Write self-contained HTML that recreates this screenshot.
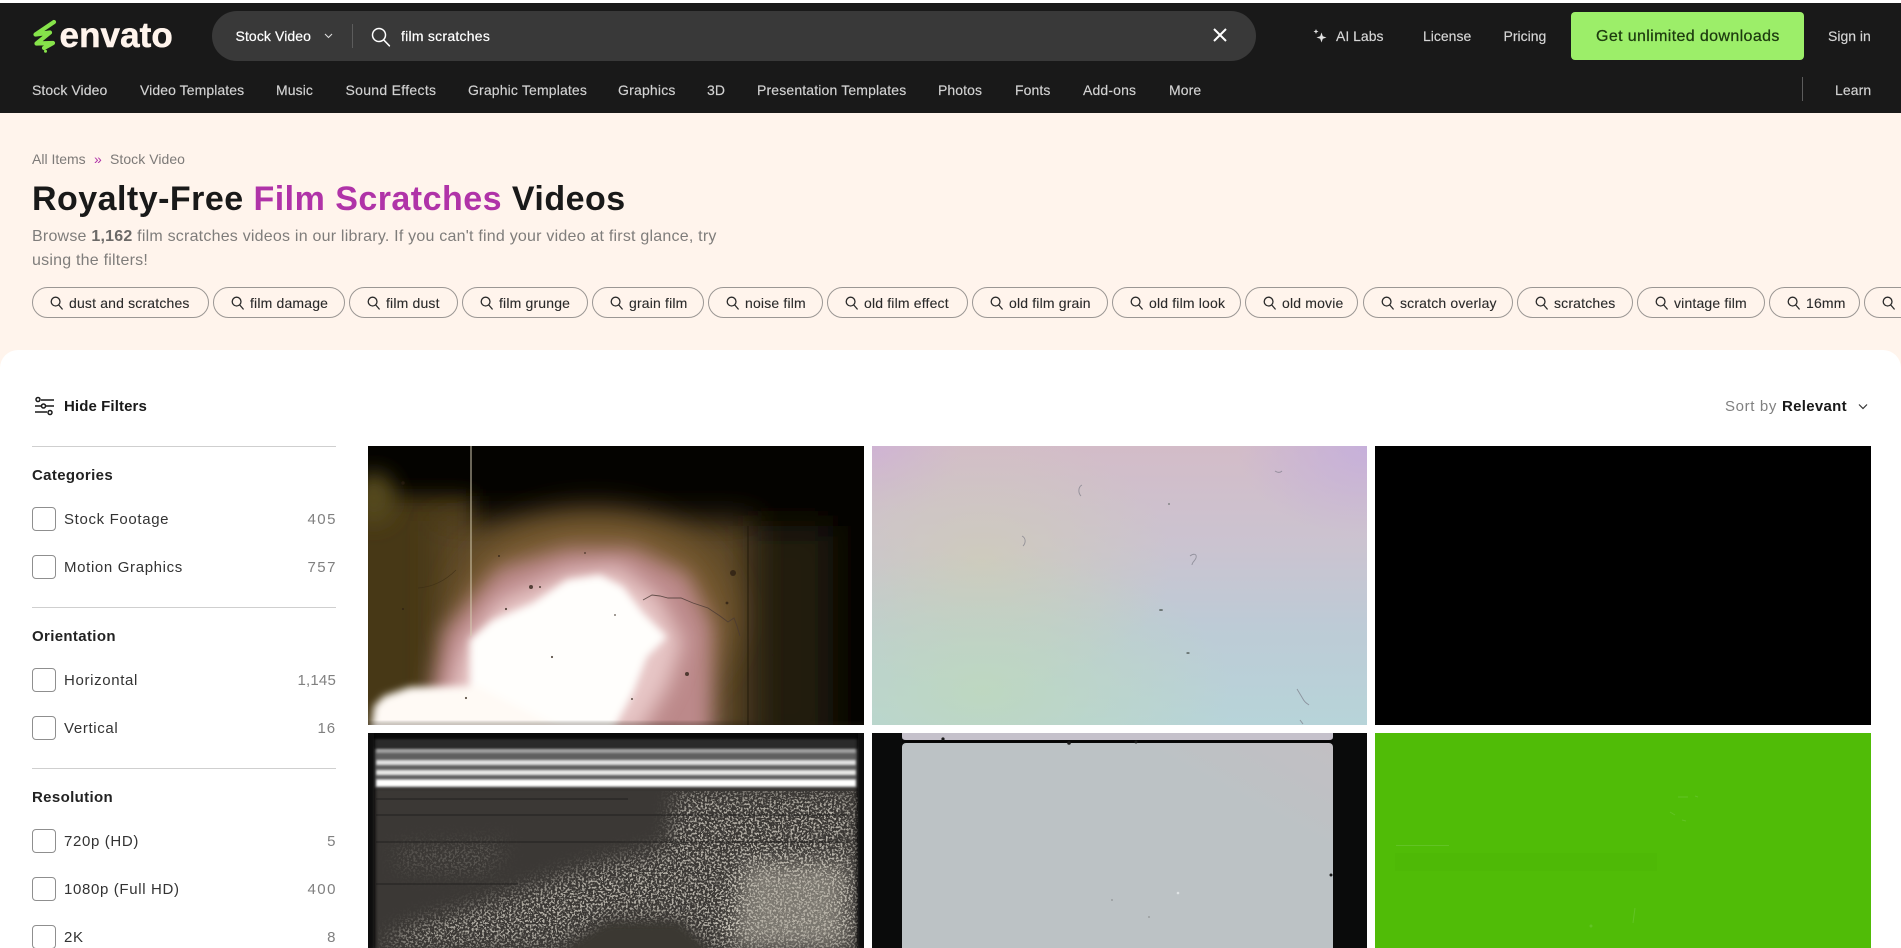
<!DOCTYPE html>
<html lang="en">
<head>
<meta charset="utf-8">
<title>Royalty-Free Film Scratches Videos</title>
<style>
html,body{margin:0;padding:0;width:1901px;height:948px;overflow:hidden;background:#fff}
body{position:relative;font-family:"Liberation Sans",sans-serif;font-size:14px;color:#191919}
a{color:inherit;text-decoration:none}
.a{position:absolute}
.t{position:absolute;white-space:nowrap;line-height:20px}
header{position:absolute;left:0;top:3px;width:1901px;height:110px;background:#191919}
.top{color:#d6d6d6;-webkit-text-stroke:.15px #d6d6d6}
.nav{color:#d2d2d2;top:80px;letter-spacing:.08px;-webkit-text-stroke:.15px #d2d2d2}
.peach{position:absolute;left:0;top:113px;width:1901px;height:270px;background:#fff4ec}
.panel{position:absolute;left:0;top:350px;width:1901px;height:598px;background:#fff;border-radius:18px 18px 0 0}
.pill{position:absolute;top:287px;height:31px;box-sizing:border-box;border:1px solid #9b9794;border-radius:16px;display:flex;align-items:center;padding-left:17px;white-space:nowrap;letter-spacing:.17px;color:#2a2a2a;-webkit-text-stroke:.1px #2a2a2a}
.pill svg{margin-right:6px;flex:none}
.rule{position:absolute;left:32px;width:304px;height:1px;background:#cfcfcf}
.h{left:32px;font-weight:bold;font-size:15px;letter-spacing:.35px;color:#222}
.box{position:absolute;left:32px;width:24px;height:24px;box-sizing:border-box;border:1px solid #8f8f8f;border-radius:4px;background:#fff}
.l{left:64px;font-size:15px;letter-spacing:.65px;color:#333}
.n{right:1564px;font-size:15px;letter-spacing:1.5px;color:#808080}
.card{position:absolute;overflow:hidden;display:block}
</style>
</head>
<body>
<svg width="0" height="0" style="position:absolute">
  <defs>
    <symbol id="q" viewBox="0 0 13 14"><circle cx="5.6" cy="5.6" r="4.4" fill="none" stroke="currentColor" stroke-width="1.3"/><path d="M8.8 9l3.4 4" fill="none" stroke="currentColor" stroke-width="1.3" stroke-linecap="round"/></symbol>
    <filter id="b1" x="-5%" y="-50%" width="110%" height="200%"><feGaussianBlur stdDeviation="1.1"/></filter>
    <filter id="b2" x="-10%" y="-20%" width="120%" height="140%"><feGaussianBlur stdDeviation="2"/></filter>
    <filter id="b5" x="-20%" y="-30%" width="140%" height="160%"><feGaussianBlur stdDeviation="4"/></filter>
    <filter id="b10" x="-40%" y="-40%" width="180%" height="180%"><feGaussianBlur stdDeviation="10"/></filter>
    <filter id="b16" x="-40%" y="-40%" width="180%" height="180%"><feGaussianBlur stdDeviation="16"/></filter>
    <filter id="grain" x="0" y="0" width="1" height="1"><feTurbulence type="fractalNoise" baseFrequency=".48" numOctaves="2" seed="4"/><feColorMatrix values="0 0 0 0 .64  0 0 0 0 .61  0 0 0 0 .54  0 0 0 9 -4.500"/><feComposite in2="SourceGraphic" operator="in"/></filter>
  </defs>
</svg>

<header></header>

<!-- logo -->
<svg class="a" style="left:30px;top:17px" width="30" height="38" viewBox="0 0 30 38">
  <path d="M24 5L5.500 17.500 20 15.500 6.500 26.500 23 26 14 31" fill="none" stroke="#86e34a" stroke-width="4.200" stroke-linecap="round" stroke-linejoin="round"/>
  <circle cx="15.500" cy="34.300" r="1.500" fill="#86e34a"/>
</svg>
<a class="t" href="#" style="left:59.500px;top:20px;line-height:32px;font-size:35px;font-weight:bold;color:#fff4ec;letter-spacing:.1px;-webkit-text-stroke:.5px #fff4ec">envato</a>

<!-- search -->
<div class="a" style="left:212px;top:11px;width:1044px;height:50px;border-radius:25px;background:#393939"></div>
<span class="t" style="left:235.500px;top:26px;color:#fff;letter-spacing:.1px;-webkit-text-stroke:.2px #fff">Stock Video</span>
<svg class="a" style="left:324px;top:33px" width="9" height="6" viewBox="0 0 9 6"><path d="M1 1l3.500 3.500L8 1" fill="none" stroke="#ddd" stroke-width="1.100"/></svg>
<div class="a" style="left:352px;top:24px;width:1px;height:24px;background:#5c5c5c"></div>
<svg class="a" style="left:371px;top:27px" width="20" height="20" viewBox="0 0 20 20"><circle cx="8" cy="8" r="6.500" fill="none" stroke="#fff" stroke-width="1.500"/><path d="M12.600 12.800l5.800 6" fill="none" stroke="#fff" stroke-width="1.500" stroke-linecap="round"/></svg>
<span class="t" style="left:401px;top:26px;color:#fff;letter-spacing:.25px;-webkit-text-stroke:.2px #fff">film scratches</span>
<svg class="a" style="left:1213px;top:28px" width="14" height="14" viewBox="0 0 14 14"><path d="M1 1l12 12M13 1L1 13" stroke="#fff" stroke-width="2" fill="none"/></svg>

<!-- top right -->
<svg class="a" style="left:1312px;top:28px" width="16" height="16" viewBox="0 0 16 16"><path d="M9.500 4.500l1.300 3.700 3.700 1.300-3.700 1.300-1.300 3.700-1.300-3.700L4.500 9.500l3.700-1.300z" fill="#e2e2e2"/><path d="M4 1l.7 1.800 1.800.7-1.800.7L4 6l-.7-1.800-1.800-.7 1.800-.7z" fill="#e2e2e2"/></svg>
<a class="t top" href="#" style="left:1336px;top:26px">AI Labs</a>
<a class="t top" href="#" style="left:1423px;top:26px">License</a>
<a class="t top" href="#" style="left:1503.500px;top:26px">Pricing</a>
<a class="a" href="#" style="left:1571px;top:12px;width:233px;height:48px;border-radius:4px;background:#9cee69"></a>
<span class="t" style="left:1596px;top:27px;font-size:16px;letter-spacing:.37px;color:#1c3a0e;-webkit-text-stroke:.25px #1c3a0e">Get unlimited downloads</span>
<a class="t top" href="#" style="left:1828px;top:26px">Sign in</a>

<!-- nav -->
<a class="t nav" href="#" style="left:32px">Stock Video</a>
<a class="t nav" href="#" style="left:140px">Video Templates</a>
<a class="t nav" href="#" style="left:276px">Music</a>
<a class="t nav" href="#" style="left:345.500px;letter-spacing:.3px">Sound Effects</a>
<a class="t nav" href="#" style="left:468px;letter-spacing:.15px">Graphic Templates</a>
<a class="t nav" href="#" style="left:618px;letter-spacing:.2px">Graphics</a>
<a class="t nav" href="#" style="left:707px">3D</a>
<a class="t nav" href="#" style="left:757px;letter-spacing:.15px">Presentation Templates</a>
<a class="t nav" href="#" style="left:938px">Photos</a>
<a class="t nav" href="#" style="left:1015px">Fonts</a>
<a class="t nav" href="#" style="left:1083px;letter-spacing:.15px">Add-ons</a>
<a class="t nav" href="#" style="left:1169px">More</a>
<div class="a" style="left:1802px;top:77px;width:1px;height:24px;background:#5c5c5c"></div>
<a class="t nav" href="#" style="left:1835px">Learn</a>

<!-- hero -->
<div class="peach"></div>
<span class="t" style="left:32px;top:149px;color:#7d7a78">All Items</span>
<span class="t" style="left:94px;top:149px;color:#b033a8">»</span>
<span class="t" style="left:110px;top:149px;color:#7d7a78;letter-spacing:.05px">Stock Video</span>
<h1 class="t" style="left:32px;top:179px;margin:0;line-height:40px;font-size:34px;font-weight:bold;letter-spacing:.47px;color:#191919">Royalty-Free <span style="color:#b033a8">Film Scratches</span> Videos</h1>
<p class="a" style="left:32px;top:225px;margin:0;width:700px;font-size:16px;line-height:24px;letter-spacing:.22px;color:#7f7d7b">Browse <b style="color:#6b6967">1,162</b> film scratches videos in our library. If you can't find your video at first glance, try<br>using the filters!</p>

<a class="pill" href="#" style="left:32px;width:177px"><svg width="13" height="14"><use href="#q"/></svg>dust and scratches</a>
<a class="pill" href="#" style="left:213px;width:132px"><svg width="13" height="14"><use href="#q"/></svg>film damage</a>
<a class="pill" href="#" style="left:349px;width:109px"><svg width="13" height="14"><use href="#q"/></svg>film dust</a>
<a class="pill" href="#" style="left:462px;width:126px"><svg width="13" height="14"><use href="#q"/></svg>film grunge</a>
<a class="pill" href="#" style="left:592px;width:112px"><svg width="13" height="14"><use href="#q"/></svg>grain film</a>
<a class="pill" href="#" style="left:708px;width:115px"><svg width="13" height="14"><use href="#q"/></svg>noise film</a>
<a class="pill" href="#" style="left:827px;width:141px"><svg width="13" height="14"><use href="#q"/></svg>old film effect</a>
<a class="pill" href="#" style="left:972px;width:136px"><svg width="13" height="14"><use href="#q"/></svg>old film grain</a>
<a class="pill" href="#" style="left:1112px;width:129px"><svg width="13" height="14"><use href="#q"/></svg>old film look</a>
<a class="pill" href="#" style="left:1245px;width:113px"><svg width="13" height="14"><use href="#q"/></svg>old movie</a>
<a class="pill" href="#" style="left:1363px;width:150px"><svg width="13" height="14"><use href="#q"/></svg>scratch overlay</a>
<a class="pill" href="#" style="left:1517px;width:116px"><svg width="13" height="14"><use href="#q"/></svg>scratches</a>
<a class="pill" href="#" style="left:1637px;width:128px"><svg width="13" height="14"><use href="#q"/></svg>vintage film</a>
<a class="pill" href="#" style="left:1769px;width:91px"><svg width="13" height="14"><use href="#q"/></svg>16mm</a>
<a class="pill" href="#" style="left:1864px;width:110px"><svg width="13" height="14"><use href="#q"/></svg>stock</a>

<div class="panel"></div>

<!-- toolbar -->
<svg class="a" style="left:34px;top:396px" width="21" height="20" viewBox="0 0 21 20">
  <g fill="none" stroke="#191919" stroke-width="1.500"><path d="M7 4h13M1 10h6M12 10h8M1 16h12"/><circle cx="4" cy="3.500" r="2"/><circle cx="9.500" cy="10" r="2"/><circle cx="16" cy="16.500" r="2"/></g>
</svg>
<span class="t" style="left:64px;top:397px;font-size:15px;font-weight:bold;letter-spacing:.1px">Hide Filters</span>
<span class="t" style="left:1725px;top:397px;font-size:15px;letter-spacing:.65px;color:#808080">Sort by</span>
<span class="t" style="left:1782px;top:397px;font-size:15px;font-weight:bold;letter-spacing:.3px;color:#191919">Relevant</span>
<svg class="a" style="left:1858px;top:403px" width="10" height="7" viewBox="0 0 10 7"><path d="M1 1.500l4 4 4-4" fill="none" stroke="#333" stroke-width="1.200"/></svg>

<!-- filters -->
<div class="rule" style="top:446px"></div>
<span class="t h" style="top:466px">Categories</span>
<span class="box" style="top:507px"></span><span class="t l" style="top:510px">Stock Footage</span><span class="t n" style="top:510px">405</span>
<span class="box" style="top:555px"></span><span class="t l" style="top:558px">Motion Graphics</span><span class="t n" style="top:558px">757</span>
<div class="rule" style="top:607px"></div>
<span class="t h" style="top:627px">Orientation</span>
<span class="box" style="top:668px"></span><span class="t l" style="top:671px">Horizontal</span><span class="t n" style="top:671px;letter-spacing:.2px;right:1565px">1,145</span>
<span class="box" style="top:716px"></span><span class="t l" style="top:719px">Vertical</span><span class="t n" style="top:719px;letter-spacing:.9px;right:1565px">16</span>
<div class="rule" style="top:768px"></div>
<span class="t h" style="top:788px">Resolution</span>
<span class="box" style="top:829px"></span><span class="t l" style="top:832px">720p (HD)</span><span class="t n" style="top:832px">5</span>
<span class="box" style="top:877px"></span><span class="t l" style="top:880px">1080p (Full HD)</span><span class="t n" style="top:880px">400</span>
<span class="box" style="top:925px"></span><span class="t l" style="top:928px">2K</span><span class="t n" style="top:928px">8</span>

<!-- card 1 -->
<a class="card" href="#" style="left:368px;top:446px;width:496px;height:279px;background:#040300">
<svg width="496" height="279" viewBox="0 0 496 279">
  <path d="M375 80H465V300H375z" fill="#241b0c" filter="url(#b16)"/>
  <rect x="-20" y="50" width="125" height="260" fill="#463819" filter="url(#b10)"/>
  <ellipse cx="6" cy="52" rx="22" ry="26" fill="#54491f" filter="url(#b10)"/>
  <path d="M70 75H385V300H70z" fill="#5c4727" filter="url(#b16)"/>
  <ellipse cx="225" cy="170" rx="140" ry="105" fill="#74592f" filter="url(#b16)"/>
  <path d="M75 185L130 122 200 102 265 102 320 128 345 180 345 300H55L65 235z" fill="#bc898a" filter="url(#b10)"/>
  <path d="M95 200L130 155 200 125 250 120 290 150 315 195 300 240 270 290H70z" fill="#e7c6c6" filter="url(#b10)"/>
  <path d="M102 290V194L125 174 165 157 199 134 232 129 255 141 275 167 299 191 279 211 265 247 242 290z" fill="#fffefc" filter="url(#b5)"/>
  <path d="M2 290L6 260 16 250 42 241 110 240 210 290z" fill="#fffaf5" filter="url(#b5)"/>
  <rect x="-10" y="276" width="516" height="6" fill="#2a2212" opacity=".3" filter="url(#b2)"/>
  <path d="M103 0V190" stroke="#d8cfb4" stroke-width="1.300" opacity=".75"/>
  <path d="M380 80V279" stroke="#1c1506" stroke-width="1" opacity=".8"/>
  <path d="M275 154l9-5 8 1 8 2 13 0 12 5 15 5 12 8 8 6 6-4 3 8 3 10" fill="none" stroke="#4a3a34" stroke-width=".9" opacity=".8"/>
  <path d="M50 142c15-1 28-8 38-18" fill="none" stroke="#3a2c14" stroke-width=".7" opacity=".7"/>
  <g fill="#2a1d12" opacity=".75">
    <circle cx="35" cy="37" r="1.700"/><circle cx="127" cy="69" r="1.100"/><circle cx="281" cy="63" r="1.100"/><circle cx="131" cy="110" r="1"/><circle cx="217" cy="107" r=".9"/><circle cx="138" cy="163" r="1.100"/><circle cx="35" cy="163" r="1"/><circle cx="359" cy="157" r="1.400"/><circle cx="405" cy="209" r="1"/><circle cx="184" cy="211" r="1.100"/><circle cx="247" cy="169" r=".9"/><circle cx="264" cy="253" r="1"/><circle cx="98" cy="252" r="1.100"/><circle cx="319" cy="228" r="2"/><circle cx="365" cy="127" r="3"/><circle cx="163" cy="141" r="2"/><circle cx="172" cy="141" r="1"/>
  </g>
</svg>
</a>

<!-- card 2 -->
<a class="card" href="#" style="left:872px;top:446px;width:495px;height:279px;background:
  radial-gradient(ellipse 250px 140px at 110px 245px,rgba(190,216,190,.9),rgba(190,216,190,0)),
  radial-gradient(ellipse 190px 130px at 110px 115px,rgba(208,204,184,.8),rgba(208,204,184,0)),
  radial-gradient(ellipse 130px 90px at 495px 0,rgba(196,174,222,.85),rgba(196,174,222,0)),
  radial-gradient(ellipse 90px 70px at 0 0,rgba(206,178,214,.8),rgba(206,178,214,0)),
  linear-gradient(180deg,#d3bcc8 0,#cbc3d0 35%,#bdcbd6 65%,#b7d4d9 100%)">
<svg width="495" height="279" viewBox="0 0 495 279" style="display:block">
  <g fill="none" stroke="#7a7a86" stroke-width=".9" opacity=".7">
    <path d="M210 39c-4 2-4 8-1 11"/><path d="M150 90c4 2 4 7 1 10"/><path d="M403 25c3 2 5 2 7 0"/><path d="M318 110c4-3 7-2 6 2-1 3-4 4-4 7"/><path d="M425 243l6 10c2 4 5 5 6 6"/><path d="M428 274l3 4"/>
  </g>
  <g fill="#58625e" opacity=".8"><ellipse cx="289" cy="164" rx="2" ry="1"/><ellipse cx="316" cy="207" rx="1.700" ry="1"/><circle cx="297" cy="58" r=".9"/></g>
</svg>
</a>

<!-- card 3 -->
<a class="card" href="#" style="left:1375px;top:446px;width:496px;height:279px;background:#000"></a>

<!-- card 4 -->
<a class="card" href="#" style="left:368px;top:733px;width:496px;height:215px;background:#090909">
<svg width="496" height="215" viewBox="0 0 496 215" style="display:block">
  <rect x="6" y="54" width="484" height="170" fill="#3b3936" filter="url(#b2)"/>
  <rect x="6" y="15" width="484" height="40" fill="#5e5e5e" filter="url(#b1)"/>
  <rect x="6" y="6" width="484" height="10" fill="#2a2a2a" filter="url(#b1)"/>
  <g filter="url(#b1)">
    <rect x="8" y="16" width="480" height="4" fill="#a0a0a0"/>
    <rect x="8" y="27" width="480" height="5" fill="#e0e0e0"/>
    <rect x="8" y="37" width="480" height="5" fill="#e8e8e6"/>
    <rect x="8" y="46.500" width="480" height="7" fill="#ffffff"/>
  </g>
  <g filter="url(#grain)"><g filter="url(#b10)">
    <path d="M310 58H490V215H340L310 188H240L190 215H10L40 195 120 170 220 135 300 115z" fill="#fff" opacity=".8"/>
    <path d="M375 130H490V215H345z" fill="#fff"/>
    <path d="M30 115L140 110 120 140 30 135z" fill="#fff" opacity=".25"/>
  </g></g>
  <path d="M375 130H478V215H365z" fill="#a6a196" opacity=".6" filter="url(#b10)"/>
  <path d="M190 222L240 190H310L345 222z" fill="#3a3733" filter="url(#b5)"/>
  <g stroke="#1c1b1a" stroke-width="1" opacity=".8"><path d="M8 66H260M8 82H480M8 109H480M8 151H150"/></g>
  <path d="M-4 0H6V215H-4zM490 0H500V215H490z" fill="#0a0a0a" filter="url(#b2)"/>
</svg>
</a>

<!-- card 5 -->
<a class="card" href="#" style="left:872px;top:733px;width:495px;height:215px;background:#0a0b0b">
<svg width="495" height="215" viewBox="0 0 495 215" style="display:block">
  <defs><linearGradient id="g5" x1="1" y1="0" x2=".4" y2=".6"><stop offset="0" stop-color="#c2bfc3"/><stop offset=".4" stop-color="#bcc2c5"/><stop offset="1" stop-color="#bcc2c5"/></linearGradient></defs>
  <path d="M30 0H461V4Q461 7 457 7H34Q30 7 30 4z" fill="#c5c1cb"/>
  <rect x="30" y="10" width="431" height="230" rx="4" fill="url(#g5)"/>
  <path d="M30 8.500H461" stroke="#050505" stroke-width="2"/>
  <g fill="#1a1a1a"><circle cx="71" cy="6" r="1.600"/><circle cx="197" cy="10" r="1.800"/><circle cx="264" cy="9" r="1.500"/><circle cx="459" cy="142" r="1.500"/></g>
  <g fill="#8a8e90" opacity=".7"><circle cx="240" cy="167" r="1"/><circle cx="277" cy="184" r="1"/></g>
  <circle cx="306" cy="160" r="1.300" fill="#dfe3e4"/>
</svg>
</a>

<!-- card 6 -->
<a class="card" href="#" style="left:1375px;top:733px;width:496px;height:215px;background:#50bc07">
<svg width="496" height="215" viewBox="0 0 496 215" style="display:block">
  <rect x="20" y="120" width="262" height="18" fill="#4eb906"/>
  <path d="M21 112.500H74M303 64h10M295 79l5 3M307 87l4 1M320 63l3 1M260 175l-2 15" stroke="#62c325" stroke-width="1" fill="none"/>
  <circle cx="216" cy="193" r="1.500" fill="#62c325"/>
</svg>
</a>
</body>
</html>
